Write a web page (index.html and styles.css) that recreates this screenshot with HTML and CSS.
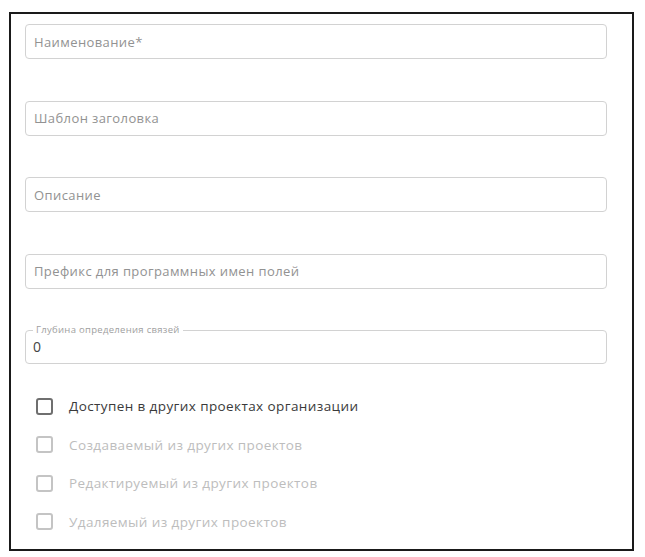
FILE: index.html
```html
<!DOCTYPE html>
<html lang="ru">
<head>
    <meta charset="UTF-8">
    <title>Тип объекта</title>
    <link rel="stylesheet" href="styles.css">
</head>
<body>
    <div class="frame">
        <form class="form">
            <div class="fields">
                <input type="text" class="field" placeholder="Наименование*">
                <input type="text" class="field" placeholder="Шаблон заголовка">
                <input type="text" class="field" placeholder="Описание">
                <input type="text" class="field" placeholder="Префикс для программных имен полей">
                <fieldset class="outlined">
                    <legend>Глубина определения связей</legend>
                    <input type="text" class="value" value="0">
                </fieldset>
            </div>

            <div class="checks">
                <label class="check">
                    <span class="box"></span>
                    <span>Доступен в других проектах организации</span>
                </label>
                <label class="check disabled">
                    <span class="box"></span>
                    <span>Создаваемый из других проектов</span>
                </label>
                <label class="check disabled">
                    <span class="box"></span>
                    <span>Редактируемый из других проектов</span>
                </label>
                <label class="check disabled">
                    <span class="box"></span>
                    <span>Удаляемый из других проектов</span>
                </label>
            </div>
        </form>
    </div>
</body>
</html>
```

FILE: styles.css
```css
body {
    margin: 0;
    padding: 0;
    background: #fff;
    font-family: "Open Sans", "Noto Sans", sans-serif;
}
.frame {
    box-sizing: border-box;
    margin: 12px 0 0 9px;
    width: 625px;
    height: 539px;
    border: 2px solid #1a1a1a;
    background: #fff;
}
.form {
    padding: 10px 25px 0 14px;
}
.fields {
    display: flex;
    flex-direction: column;
    gap: 41.5px;
}
.field {
    box-sizing: border-box;
    height: 35px;
    width: 100%;
    margin: 0;
    padding: 0 8px;
    border: 1px solid #d2d2d2;
    border-radius: 4px;
    font-family: inherit;
    font-size: 13px;
    letter-spacing: 0.4px;
    color: #333;
    outline: none;
}
.field::placeholder {
    color: #929292;
}
.outlined {
    box-sizing: border-box;
    height: 39px;
    margin: -5px 0 0 0;
    padding: 0 8px 0 7px;
    border: 1px solid #d2d2d2;
    border-radius: 4px;
}
.outlined legend {
    padding: 0 3px;
    font-size: 9.5px;
    line-height: 10px;
    letter-spacing: 0.3px;
    color: #a0a0a0;
}
.value {
    border: none;
    outline: none;
    padding: 0;
    margin: 1px 0 0 0;
    width: 100%;
    font-family: inherit;
    font-size: 14px;
    color: #444;
}
.checks {
    display: flex;
    flex-direction: column;
    margin-top: 23px;
    padding-left: 11px;
}
.check {
    display: flex;
    align-items: center;
    gap: 16px;
    height: 38.5px;
    font-size: 13.5px;
    letter-spacing: 0.4px;
    color: #3a3a3a;
}
.box {
    box-sizing: border-box;
    width: 17px;
    height: 17px;
    border: 2px solid #6f6f6f;
    border-radius: 3px;
}
.disabled {
    color: #bdbdbd;
}
.disabled .box {
    border-color: #c4c4c4;
}
```
